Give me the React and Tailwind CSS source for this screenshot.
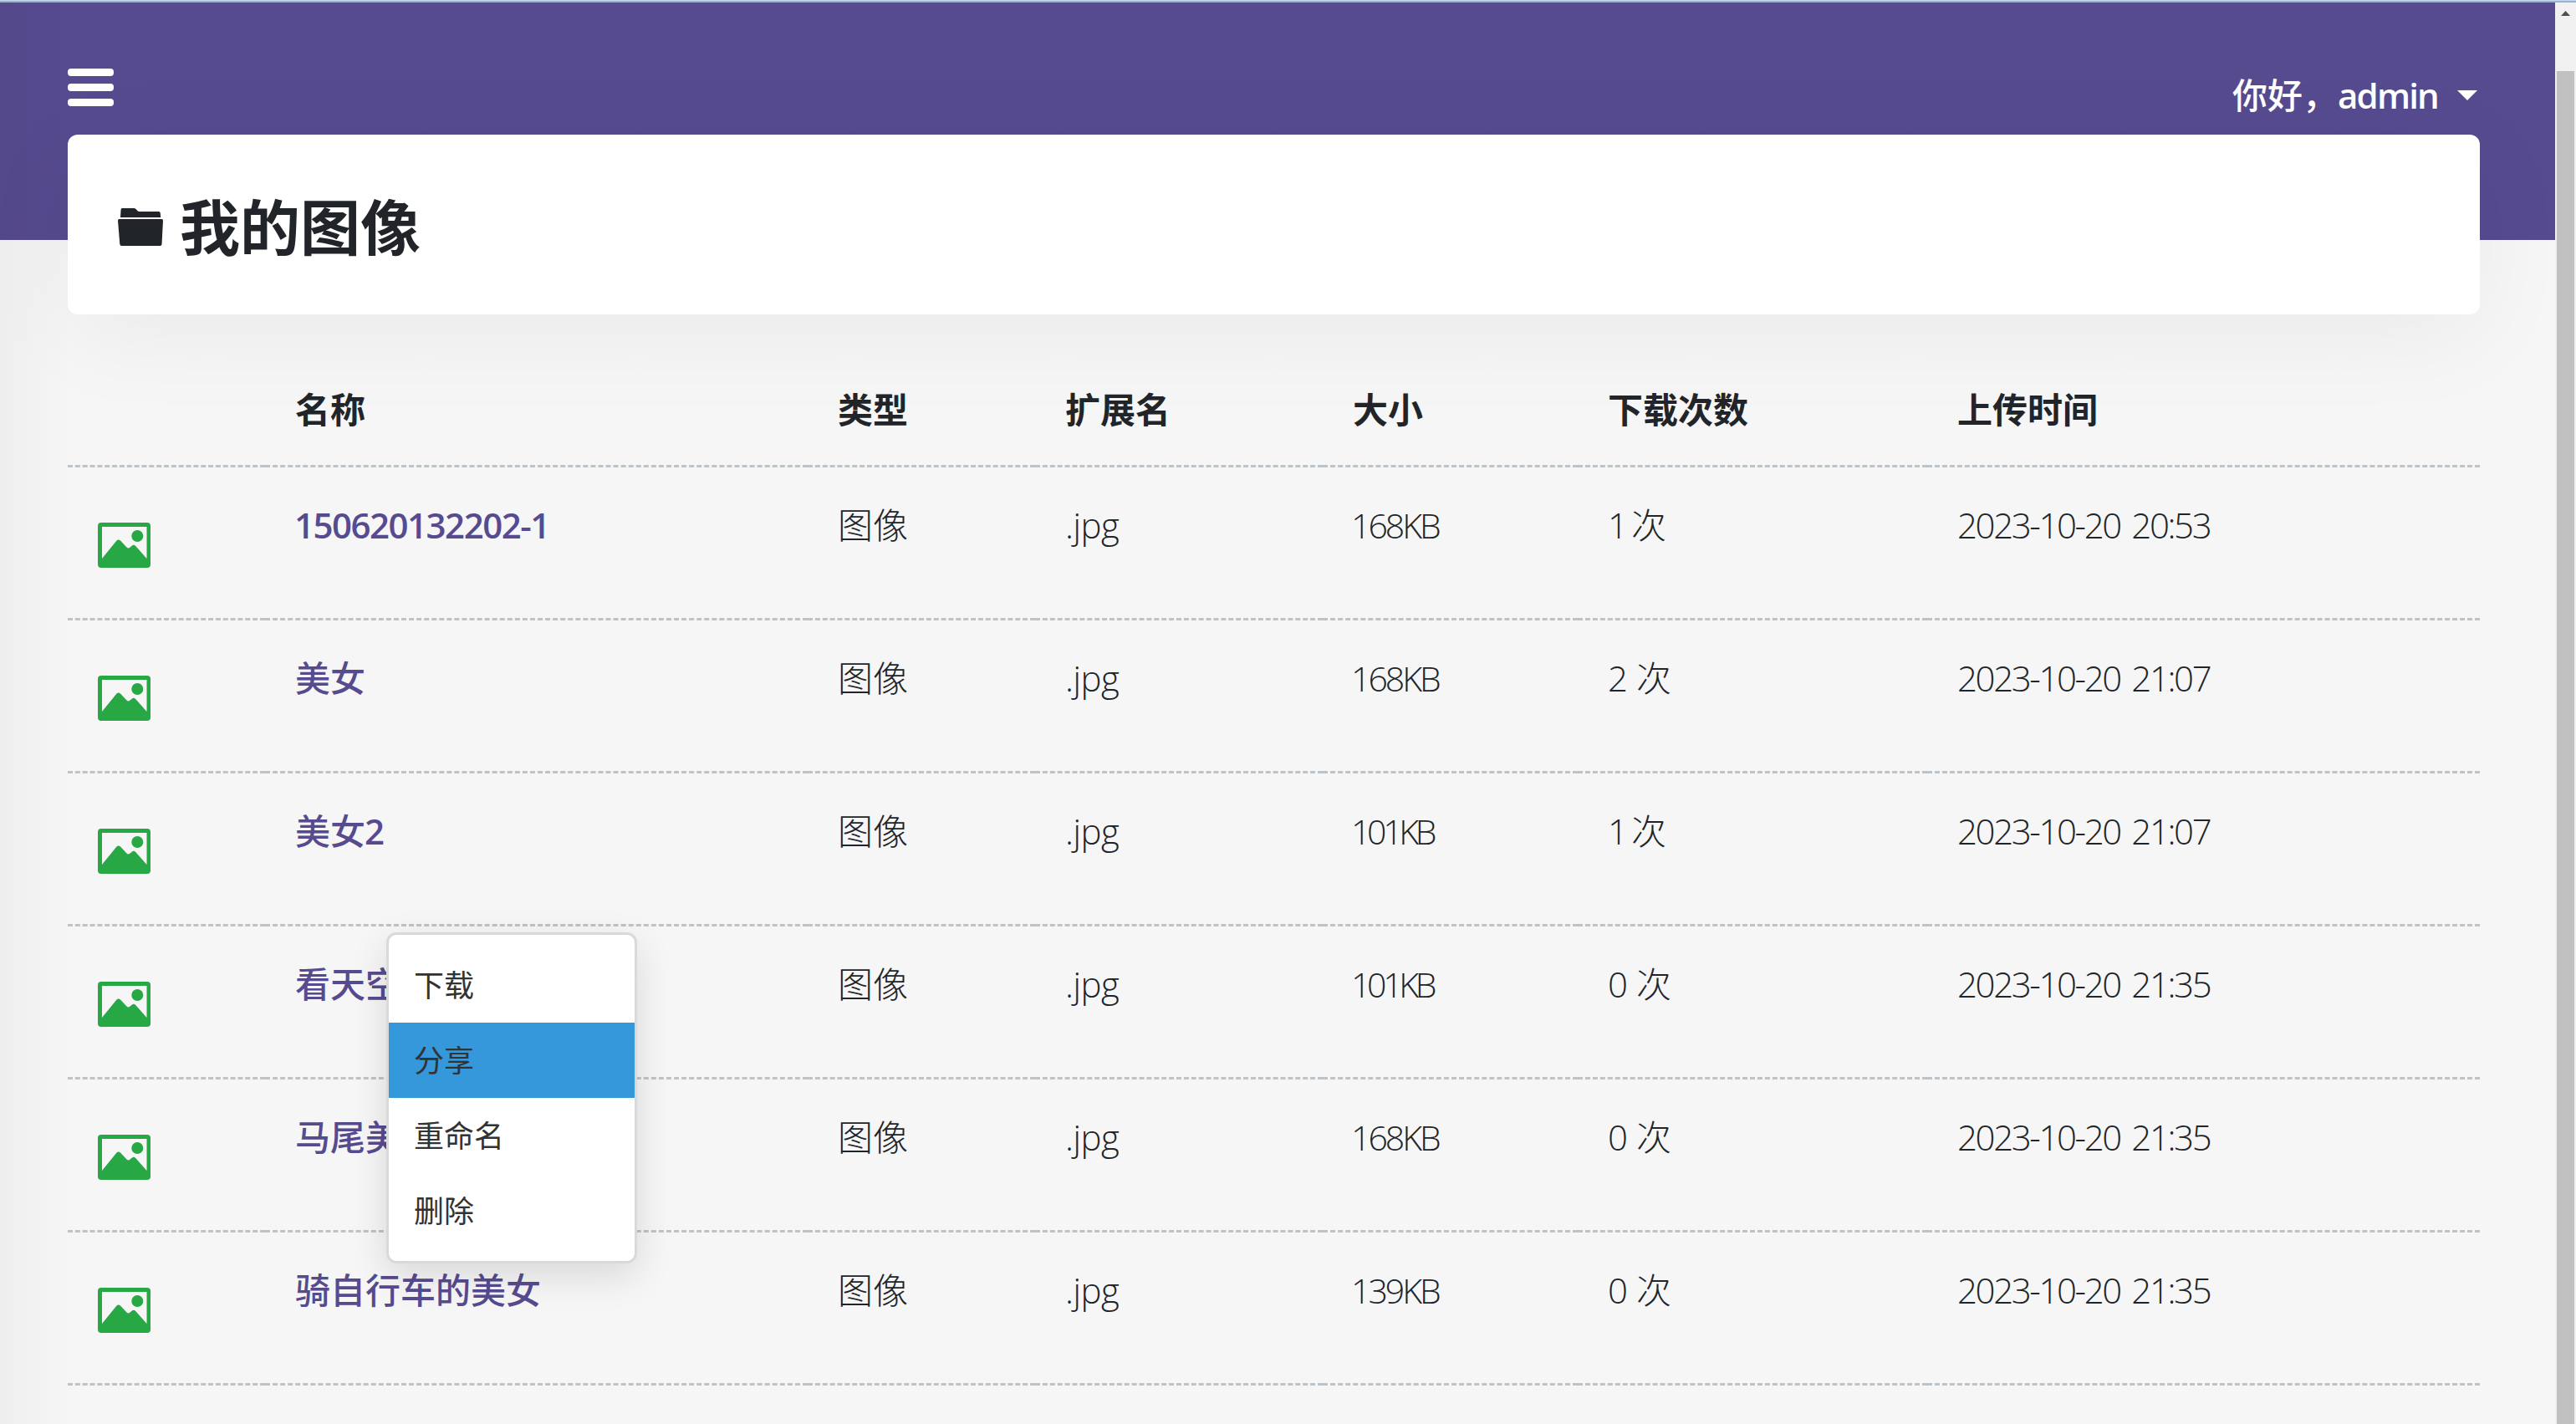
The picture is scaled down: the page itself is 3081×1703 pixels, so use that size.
const files = [
  ["150620132202-1", "168KB", "1", "2023-10-20 20:53"],
  ["美女", "168KB", "2", "2023-10-20 21:07"],
  ["美女2", "101KB", "1", "2023-10-20 21:07"],
  ["看天空的美女", "101KB", "0", "2023-10-20 21:35"],
  ["马尾美女", "168KB", "0", "2023-10-20 21:35"],
  ["骑自行车的美女", "139KB", "0", "2023-10-20 21:35"],
];
const heads = ["", "名称", "类型", "扩展名", "大小", "下载次数", "上传时间"];
const menu = ["下载", "分享", "重命名", "删除"];

function ImageIcon() {
  return (
    <svg className="block h-[54px] w-[63px]" viewBox="0 0 63 54">
      <path
        fill="#28a745"
        fillRule="evenodd"
        d="M4 0H59Q63 0 63 4V50Q63 54 59 54H4Q0 54 0 50V4Q0 0 4 0ZM5 5V43L22.5 21.5Q24.7 19.5 27 21.5L34.5 29.500Q36.500 31.500 38.500 29.500L41 27.500Q43 26 45 27.800L58.500 43V5ZM47.300 9A7 7 0 1 1 47.300 23A7 7 0 1 1 47.300 9Z"
      />
    </svg>
  );
}

function FolderIcon() {
  return (
    <svg className="block h-[45px] w-[54px]" viewBox="0 0 54 45" fill="#212529">
      <path d="M5 0H19Q20.500 0 21.500 1L24 3.500Q24.500 4 25.500 4H49Q50.500 4 50.700 5.500L51.200 11H3L3.600 1.500Q3.700 0 5 0Z" />
      <path d="M1.500 13H52.500Q54 13 54 14.500L52.500 43Q52.300 45 50.500 45H4.500Q2.500 45 2.300 43L0 14.500Q0 13 1.500 13Z" />
    </svg>
  );
}

const cell = "border-b-3 border-dashed border-[#bdc3c7] px-9 text-left align-top font-light";

function FileName({ name }) {
  return (
    <a className="font-medium text-[#574b90]">
      {name.split(/([\d-]+)/).filter(Boolean).map((part, i) =>
        /\d/.test(part) ? (
          <span key={i} className="-ml-px font-semibold tracking-[-1.5px]">{part}</span>
        ) : (
          part
        )
      )}
    </a>
  );
}

export default function App() {
  return (
    <div className="relative flex h-[1703px] w-[3081px] flex-col overflow-hidden bg-[#f6f6f6] font-['Open_Sans','Noto_Sans_CJK_SC',sans-serif] text-[42px] text-[#212529]">
      <div className="h-px shrink-0 bg-[#c5daf5]" />
      <div className="h-0.5 shrink-0 bg-[#9fb0ca]" />
      <div className="flex min-h-0 grow">
        <main className="flex w-[3056px] flex-col overflow-hidden bg-[linear-gradient(90deg,rgba(0,0,0,0.03),transparent_90px),linear-gradient(#574b90_284px,#f6f6f6_284px)] pr-[90px] pl-[81px]">
          <header className="flex h-[158px] shrink-0 justify-between text-white">
            <button className="mt-[79px] flex h-[45px] w-[55px] flex-col gap-[9px]">
              <span className="h-[9px] w-full rounded-[4px] bg-white" />
              <span className="h-[9px] w-full rounded-[4px] bg-white" />
              <span className="h-[9px] w-full rounded-[4px] bg-white" />
            </button>
            <div className="mt-[79px] mr-[3px] flex h-[63px] items-center">
              <span className="font-medium whitespace-nowrap">
                你好，<span className="font-semibold tracking-[-1.8px]">admin</span>
              </span>
              <span className="ml-[23px] border-x-[12px] border-t-[12px] border-x-transparent border-t-white" />
            </div>
          </header>
          <section className="flex h-[215px] shrink-0 items-center gap-[20px] rounded-[12px] bg-white pt-[5px] pl-[60px] shadow-[0_24px_120px_rgba(0,0,0,0.05)]">
            <FolderIcon />
            <h1 className="text-[72px] leading-[86px] font-bold">我的图像</h1>
          </section>
          <table className="mt-[45px] w-[2885px] shrink-0 table-fixed border-separate border-spacing-0">
            <colgroup>
              <col className="w-[236px]" />
              <col className="w-[649px]" />
              <col className="w-[272px]" />
              <col className="w-[344px]" />
              <col className="w-[305px]" />
              <col className="w-[418px]" />
              <col />
            </colgroup>
            <thead>
              <tr className="h-[138px]">
                {heads.map((h, i) => (
                  <th key={i} className="border-b-3 border-dashed border-[#bdc3c7] px-9 pt-[37px] text-left align-top leading-[63px] font-bold">
                    {h}
                  </th>
                ))}
              </tr>
            </thead>
            <tbody>
              {files.map(([name, size, count, time]) => (
                <tr key={name} className="h-[183px] leading-[63px]">
                  <td className={`${cell} pt-[66px]`}><ImageIcon /></td>
                  <td className={`${cell} pt-[37px]`}><FileName name={name} /></td>
                  <td className={`${cell} pt-[37px]`}>图像</td>
                  <td className={`${cell} pt-[37px] tracking-[-0.5px]`}>.jpg</td>
                  <td className={`${cell} pt-[37px]`}>
                    <span className={size.startsWith("101") ? "-ml-0.5 text-[41px] tracking-[-4.3px]" : "-ml-0.5 text-[41px] tracking-[-3px]"}>{size}</span>
                  </td>
                  <td className={`${cell} pt-[37px]`}>
                    <span className={count === "1" ? "tracking-[-3.5px]" : "tracking-[-0.5px]"}>{count} </span>次
                  </td>
                  <td className={`${cell} pt-[37px] tracking-[-2.4px] [word-spacing:5px]`}>{time}</td>
                </tr>
              ))}
            </tbody>
          </table>
        </main>
        <aside className="flex w-[25px] flex-col items-center bg-[#f1f1f1]">
          <svg className="mt-[10px] h-[6px] w-[11px]" viewBox="0 0 11 6"><path fill="#505050" d="M5.500 0L11 6H0Z" /></svg>
          <div className="mt-[66px] w-[21px] grow bg-[#c1c1c1]" />
        </aside>
      </div>
      <ul className="absolute top-[1115px] left-[462px] w-[300px] rounded-[12px] border-3 border-[#d9d9d9] bg-white py-[15px] text-[36px] text-[#333] shadow-[0_15px_45px_rgba(0,0,0,0.12)]">
        {menu.map((m) => (
          <li key={m} className={m === "分享" ? "flex h-[90px] items-center bg-[#3498db] px-[30px] pt-0.5" : "flex h-[90px] items-center px-[30px] pt-0.5"}>{m}</li>
        ))}
      </ul>
    </div>
  );
}
